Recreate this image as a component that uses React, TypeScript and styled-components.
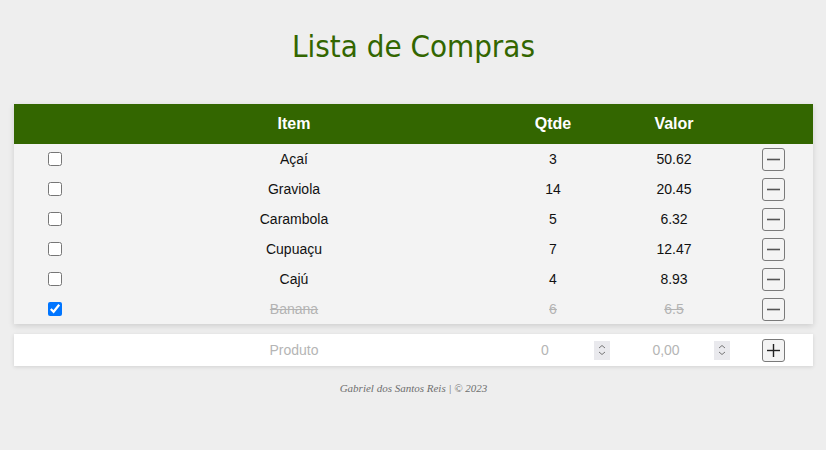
import * as React from 'react'
import styled, { createGlobalStyle } from 'styled-components'

const GlobalStyle = createGlobalStyle`
  body {
    margin: 0;
    background: #eeeeee;
    font-family: "Liberation Sans", Arial, sans-serif;
  }
`

const Page = styled.div`
  padding: 0 13px 0 14px;
`

const Title = styled.h1`
  margin: 0;
  padding-top: 26px;
  line-height: 40px;
  font-family: "DejaVu Sans Condensed", Tahoma, sans-serif;
  font-weight: normal;
  font-size: 31px;
  color: #336600;
  text-align: center;
`

const columns = '82px 1fr 122px 120px 79px'

const Table = styled.div`
  margin-top: 38px;
  background: #f3f3f3;
  box-shadow: 0 2px 6px rgba(0, 0, 0, 0.14);
`

const HeaderRow = styled.div`
  display: grid;
  grid-template-columns: ${columns};
  height: 40px;
  align-items: center;
  background: #336600;
  color: #fff;
  font-weight: bold;
  font-size: 16px;
  text-align: center;
`

const Row = styled.div<{ $done?: boolean }>`
  display: grid;
  grid-template-columns: ${columns};
  height: 30px;
  align-items: center;
  text-align: center;
  font-size: 14px;
  color: ${p => (p.$done ? '#b3b3b3' : '#111')};
  text-decoration: ${p => (p.$done ? 'line-through' : 'none')};
`

const Cell = styled.div`
  display: flex;
  justify-content: center;
  align-items: center;
`

const Check = styled.input`
  margin: 0;
  width: 14px;
  height: 14px;
`

const IconButton = styled.button`
  width: 23px;
  height: 23px;
  padding: 0;
  border: 1px solid #7a7a7a;
  border-radius: 3px;
  background: #f4f4f4;
  display: flex;
  align-items: center;
  justify-content: center;
  cursor: pointer;
`

const AddRow = styled.div`
  margin-top: 10px;
  display: grid;
  grid-template-columns: ${columns};
  height: 32px;
  align-items: center;
  background: #fff;
  box-shadow: 0 1px 4px rgba(0, 0, 0, 0.12);
`

const Field = styled.div`
  display: flex;
  align-items: center;
  padding: 0 4px;
`

const TextInput = styled.input`
  flex: 1;
  min-width: 0;
  border: 0;
  outline: 0;
  background: transparent;
  text-align: center;
  font-family: "Liberation Sans", Arial, sans-serif;
  font-size: 14px;
  color: #111;
  padding: 2px 0;

  &::placeholder {
    color: #b5b5b5;
  }
`

const Spinner = styled.span`
  width: 16px;
  height: 19px;
  background: #e9e9ed;
  display: flex;
  align-items: center;
  justify-content: center;
`

const Footer = styled.p`
  margin: 14px 0 0;
  line-height: 16px;
  text-align: center;
  font-family: "Liberation Serif", "Times New Roman", serif;
  font-style: italic;
  font-size: 11px;
  color: #6f6f6f;
`

const Minus = () => (
  <svg width="15" height="15" viewBox="0 0 15 15">
    <line x1="1" y1="7.5" x2="14" y2="7.5" stroke="#555" strokeWidth="1.6" />
  </svg>
)

const Plus = () => (
  <svg width="15" height="15" viewBox="0 0 15 15">
    <line x1="1" y1="7.5" x2="14" y2="7.5" stroke="#222" strokeWidth="1.4" />
    <line x1="7.5" y1="1" x2="7.5" y2="14" stroke="#222" strokeWidth="1.4" />
  </svg>
)

const SpinIcon = () => (
  <svg width="8" height="12" viewBox="0 0 8 12">
    <polyline points="1,4 4,1.5 7,4" fill="none" stroke="#777" strokeWidth="1" />
    <polyline points="1,8 4,10.5 7,8" fill="none" stroke="#777" strokeWidth="1" />
  </svg>
)

interface Item {
  name: string
  qtde: number
  valor: string
  done: boolean
}

const items: Item[] = [
  { name: 'Açaí', qtde: 3, valor: '50.62', done: false },
  { name: 'Graviola', qtde: 14, valor: '20.45', done: false },
  { name: 'Carambola', qtde: 5, valor: '6.32', done: false },
  { name: 'Cupuaçu', qtde: 7, valor: '12.47', done: false },
  { name: 'Cajú', qtde: 4, valor: '8.93', done: false },
  { name: 'Banana', qtde: 6, valor: '6.5', done: true }
]

export default function App() {
  const [list, setList] = React.useState(items)

  const toggle = (i: number) => {
    setList(list.map((it, j) => (j === i ? { ...it, done: !it.done } : it)))
  }

  return (
    <>
      <GlobalStyle />
      <Page>
        <Title>Lista de Compras</Title>
        <Table>
          <HeaderRow>
            <div />
            <div>Item</div>
            <div>Qtde</div>
            <div>Valor</div>
            <div />
          </HeaderRow>
          {list.map((it, i) => (
            <Row key={it.name} $done={it.done}>
              <Cell>
                <Check type="checkbox" checked={it.done} onChange={() => toggle(i)} />
              </Cell>
              <div>{it.name}</div>
              <div>{it.qtde}</div>
              <div>{it.valor}</div>
              <Cell>
                <IconButton><Minus /></IconButton>
              </Cell>
            </Row>
          ))}
        </Table>
        <AddRow>
          <div />
          <Field>
            <TextInput placeholder="Produto" />
          </Field>
          <Field>
            <TextInput placeholder="0" />
            <Spinner><SpinIcon /></Spinner>
          </Field>
          <Field>
            <TextInput placeholder="0,00" />
            <Spinner><SpinIcon /></Spinner>
          </Field>
          <Cell>
            <IconButton><Plus /></IconButton>
          </Cell>
        </AddRow>
        <Footer>Gabriel dos Santos Reis | © 2023</Footer>
      </Page>
    </>
  )
}
